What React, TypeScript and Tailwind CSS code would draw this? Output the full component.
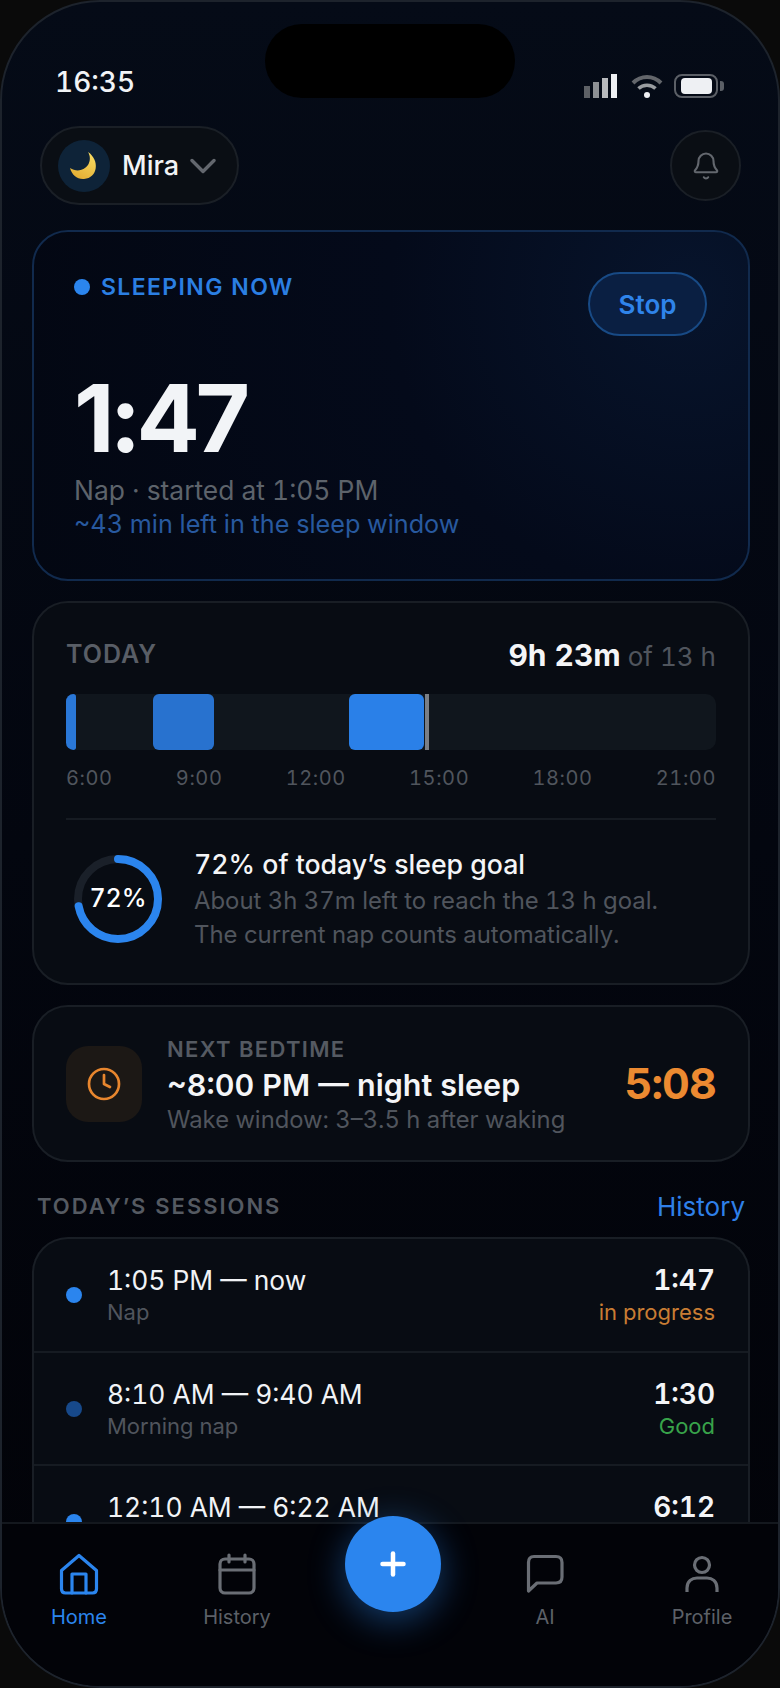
import { Bell, Clock, Plus } from "lucide-react";

const sessions = [
  { range: "1:05 PM — now", kind: "Nap", total: "1:47", note: "in progress", noteColor: "text-[#c97d33]", dot: "bg-[#2b85ee]" },
  { range: "8:10 AM — 9:40 AM", kind: "Morning nap", total: "1:30", note: "Good", noteColor: "text-[#38a34a]", dot: "bg-[#17498a]" },
];

const hours = ["6:00", "9:00", "12:00", "15:00", "18:00", "21:00"];

function StatusIcons() {
  return (
    <div className="mt-[8px] flex items-center">
      <div className="flex items-end gap-[3px]">
        <div className="h-[12px] w-[6px] bg-[#5e6166]" />
        <div className="h-[16px] w-[6px] bg-[#8d9094]" />
        <div className="h-[20px] w-[6px] bg-[#b8babd]" />
        <div className="h-[24px] w-[6px] bg-[#eef0f3]" />
      </div>
      <svg width="32" height="24" viewBox="0 0 32 24" fill="none" className="ml-[14px]">
        <path d="M2 9 C 10 1, 22 1, 30 9" stroke="#63666b" strokeWidth="4" />
        <path d="M7.5 14.5 C 12 10, 20 10, 24.5 14.5" stroke="#9a9da1" strokeWidth="3.5" />
        <circle cx="16" cy="21" r="3" fill="#eef0f3" />
      </svg>
      <div className="ml-[11px] flex h-[24px] w-[44px] items-center justify-center rounded-[8px] border-[2.5px] border-[#5b5f66]">
        <div className="h-[16px] w-[31px] rounded-[4px] bg-[#eef0f3]" />
      </div>
      <div className="ml-[2px] h-[10px] w-[4px] rounded-r-[3px] bg-[#5b5f66]" />
    </div>
  );
}

function Moon() {
  return (
    <svg width="52" height="52" viewBox="0 0 52 52">
      <defs>
        <linearGradient id="moon" x1="0.8" y1="0" x2="0.3" y2="1">
          <stop offset="0" stopColor="#f8dc63" />
          <stop offset="1" stopColor="#e3ad33" />
        </linearGradient>
      </defs>
      <path
        d="M30 12 C 42 20, 40 38, 26 39 C 19 39.5, 14 35, 12 28 C 18 32, 26 31, 30 25 C 32.5 21, 32.5 16, 30 12 Z"
        fill="url(#moon)"
      />
    </svg>
  );
}

function GoalRing() {
  const r = 40;
  const c = 2 * Math.PI * r;
  return (
    <div className="relative mb-[2px] ml-[8px] h-[88px] w-[88px] shrink-0">
      <svg width="88" height="88" viewBox="0 0 88 88" className="-rotate-90">
        <circle cx="44" cy="44" r={r} fill="none" stroke="#1a2029" strokeWidth="8" />
        <circle
          cx="44"
          cy="44"
          r={r}
          fill="none"
          stroke="#2b85ee"
          strokeWidth="8"
          strokeLinecap="round"
          strokeDasharray={`${c * 0.72} ${c}`}
        />
      </svg>
      <div className="absolute inset-0 flex items-center justify-center text-[25px] font-medium text-white">72%</div>
    </div>
  );
}

function HomeIcon() {
  return (
    <svg width="40" height="42" viewBox="0 0 40 42" fill="none" stroke="#2b85ee" strokeWidth="3.2" strokeLinejoin="round" strokeLinecap="round">
      <path d="M2.5 17.5 L20 2.5 L37.5 17.5 V36 Q37.5 40 33.5 40 H6.5 Q2.5 40 2.5 36 Z" />
      <path d="M13 40 V21 H27 V40" />
    </svg>
  );
}

function CalendarIcon() {
  return (
    <svg width="38" height="42" viewBox="0 0 38 42" fill="none" stroke="#6a6e75" strokeWidth="3.2" strokeLinecap="round" strokeLinejoin="round">
      <rect x="2" y="6" width="34" height="34" rx="5" />
      <path d="M2 17 H36" />
      <path d="M11 2 V9 M27 2 V9" />
    </svg>
  );
}

function ChatIcon() {
  return (
    <svg width="38" height="40" viewBox="0 0 38 40" fill="none" stroke="#6a6e75" strokeWidth="3.2" strokeLinejoin="round">
      <path d="M8 2.5 H30 Q36 2.5 36 8.5 V23 Q36 29 30 29 H11 L2.5 37 V8.5 Q2.5 2.5 8 2.5 Z" />
    </svg>
  );
}

function ProfileIcon() {
  return (
    <svg width="34" height="38" viewBox="0 0 34 38" fill="none" stroke="#6a6e75" strokeWidth="3.2">
      <circle cx="17" cy="10" r="7.5" />
      <path d="M2 37 V33 C 2 26, 7 23, 12 23 H22 C 27 23, 32 26, 32 33 V37" />
    </svg>
  );
}

function NavItem({ label, active, children }: { label: string; active?: boolean; children: React.ReactNode }) {
  return (
    <div className="flex flex-col items-center">
      <div className="flex h-[42px] items-center justify-center">{children}</div>
      <div className={`mt-[9px] text-[20px] leading-[26px] ${active ? "text-[#2b85ee]" : "text-[#5c6067]"}`}>{label}</div>
    </div>
  );
}

export default function App() {
  return (
    <div className="h-[1688px] w-[780px] overflow-hidden bg-[#0a0a0a] font-['Inter',sans-serif] text-white tabular-nums">
      <div className="relative flex h-full flex-col overflow-hidden rounded-[100px] border-2 border-[#1d232c] bg-gradient-to-b from-[#050b17] via-[#03060f] to-[#020308]">
        <div className="absolute left-[263px] top-[22px] h-[74px] w-[250px] rounded-[37px] bg-black" />

        <div className="flex h-[124px] shrink-0 items-start justify-between pl-[53px] pr-[54px] pt-[64px]">
          <div className="text-[28px] font-medium leading-[32px] text-[#f1f3f6]">16:35</div>
          <StatusIcons />
        </div>

        <div className="flex h-[79px] shrink-0 items-center justify-between pl-[38px] pr-[37px]">
          <div className="flex h-[79px] w-[199px] items-center rounded-full border-2 border-[#1a1f26] bg-[#0a0e14] pl-[16px]">
            <div className="h-[52px] w-[52px] rounded-full bg-[#0e2338]">
              <Moon />
            </div>
            <span className="ml-[12px] mt-[2px] text-[27px] font-medium text-[#f1f3f6]">Mira</span>
            <svg width="26" height="16" viewBox="0 0 26 16" fill="none" stroke="#63676e" strokeWidth="3.4" strokeLinecap="round" strokeLinejoin="round" className="ml-[11px]">
              <path d="M2 2.5 L13 13.5 L24 2.5" />
            </svg>
          </div>
          <div className="flex h-[71px] w-[71px] items-center justify-center rounded-full border-2 border-[#1a1f26] bg-[#0a0e14]">
            <Bell size={30} strokeWidth={1.7} className="text-[#63676e]" />
          </div>
        </div>

        <div className="mt-[25px] flex min-h-0 flex-1 flex-col overflow-hidden pl-[30px] pr-[30px]">
          <div className="-mr-[2px] h-[351px] shrink-0 rounded-[36px] border-2 border-[#112a4d] bg-[radial-gradient(circle_at_92%_18%,#07142c_0%,#040a1a_42%,#030712_100%)] pl-[40px] pr-[41px] pt-[40px]">
            <div className="flex items-start justify-between">
              <div className="flex h-[30px] items-center">
                <div className="h-[16px] w-[16px] rounded-full bg-[#2b85ee]" />
                <span className="ml-[11px] text-[23px] font-semibold tracking-[0.06em] text-[#2b7fe3]">SLEEPING NOW</span>
              </div>
              <div className="flex h-[64px] w-[119px] items-center justify-center rounded-full border-2 border-[#184a85] bg-[#0a1f42] text-[26px] font-semibold text-[#2f84ea]">
                Stop
              </div>
            </div>
            <div className="mt-[44px] text-[94px] font-bold leading-[76px] tracking-[-0.05em] text-[#f2f4f7] [font-variant-numeric:normal]">1:47</div>
            <div className="mt-[17px] text-[26.4px] leading-[34px] text-[#5d636b]">Nap · started at 1:05 PM</div>
            <div className="text-[25.2px] leading-[34px] text-[#28599f]">~43 min left in the sleep window</div>
          </div>

          <div className="-mr-[2px] mt-[20px] h-[384px] shrink-0 rounded-[36px] border-2 border-[#191e25] bg-[#080c13] px-[32px] pt-[32px]">
            <div className="flex h-[40px] items-center justify-between">
              <span className="text-[25px] font-semibold tracking-[0.04em] text-[#595e66]">TODAY</span>
              <span className="text-[26px] text-[#50555d]">
                <span className="text-[30px] font-bold text-[#f4f5f7]">9h 23m</span> of 13 h
              </span>
            </div>
            <div className="relative mt-[19px] h-[56px] rounded-[10px] bg-[#10161d]">
              <div className="absolute bottom-0 left-0 top-0 w-[10px] rounded-l-[8px] rounded-r-[3px] bg-[#2a78d8]" />
              <div className="absolute bottom-0 left-[87px] top-0 w-[61px] rounded-[6px] bg-[#2872cf]" />
              <div className="absolute bottom-0 left-[283px] top-0 w-[75px] rounded-[6px] bg-[#2a80e8]" />
              <div className="absolute bottom-0 left-[359px] top-0 w-[4px] bg-[#7a7f86]" />
            </div>
            <div className="mt-[16px] flex justify-between text-[20px] leading-[24px] tracking-[0.03em] text-[#50555d]">
              {hours.map((h) => (
                <span key={h}>{h}</span>
              ))}
            </div>
            <div className="mt-[28px] flex items-center gap-[32px] border-t-2 border-[#161b22] pt-[28px]">
              <GoalRing />
              <div>
                <div className="mb-[4px] text-[26.7px] font-medium leading-[32px] text-[#f4f5f7]">72% of today’s sleep goal</div>
                <div className="text-[23.9px] leading-[34px] text-[#50555d]">About 3h 37m left to reach the 13 h goal.</div>
                <div className="text-[23.9px] leading-[34px] text-[#50555d]">The current nap counts automatically.</div>
              </div>
            </div>
          </div>

          <div className="-mr-[2px] mt-[20px] flex h-[157px] shrink-0 items-center rounded-[36px] border-2 border-[#191e25] bg-[#080c13] pl-[32px] pr-[32px]">
            <div className="flex h-[76px] w-[76px] shrink-0 items-center justify-center rounded-[22px] bg-[#1c1815]">
              <Clock size={36} strokeWidth={1.8} className="text-[#e8862e]" />
            </div>
            <div className="ml-[25px] flex-1">
              <div className="text-[22px] font-semibold leading-[26px] tracking-[0.06em] text-[#555a62]">NEXT BEDTIME</div>
              <div className="text-[30.5px] font-semibold leading-[46px] text-[#f4f5f7]">~8:00 PM — night sleep</div>
              <div className="text-[23.8px] leading-[24px] text-[#50555d]">Wake window: 3–3.5 h after waking</div>
            </div>
            <div className="text-[43px] font-bold tracking-[-0.02em] text-[#ec8a31]">5:08</div>
          </div>

          <div className="-mr-[2px] mt-[29px] flex h-[30px] shrink-0 items-center justify-between pl-[5px] pr-[5px]">
            <span className="text-[22px] font-semibold tracking-[0.09em] text-[#555a62]">TODAY’S SESSIONS</span>
            <span className="text-[26px] text-[#2f80e8]">History</span>
          </div>

          <div className="-mr-[2px] mt-[16px] shrink-0 rounded-t-[36px] border-2 border-b-0 border-[#191e25] bg-[#080c13]">
            {sessions.map((s, i) => (
              <div key={s.range} className={`flex items-center pl-[32px] pr-[33px] ${i === 0 ? "h-[112px]" : "h-[113px] border-t-2 border-[#161b22]"}`}>
                <div className={`h-[16px] w-[16px] rounded-full ${s.dot}`} />
                <div className="ml-[25px] flex-1">
                  <div className="text-[26.4px] leading-[34px] text-[#f1f3f6]">{s.range}</div>
                  <div className="text-[22px] leading-[30px] text-[#50555d]">{s.kind}</div>
                </div>
                <div className="text-right">
                  <div className="text-[28px] font-semibold leading-[34px] text-[#f4f5f7]">{s.total}</div>
                  <div className={`text-[22px] leading-[30px] ${s.noteColor}`}>{s.note}</div>
                </div>
              </div>
            ))}
            {/* third row runs under the tab bar */}
            <div className="flex h-[58px] items-start border-t-2 border-[#161b22] pl-[32px] pr-[33px] pt-[24px]">
              <div className="mt-[24px] h-[16px] w-[16px] rounded-full bg-[#2b85ee]" />
              <div className="ml-[25px] flex-1 text-[26.4px] leading-[34px] text-[#f1f3f6]">12:10 AM — 6:22 AM</div>
              <div className="text-[28px] font-semibold leading-[34px] text-[#f4f5f7]">6:12</div>
            </div>
          </div>
        </div>

        <div className="grid h-[164px] shrink-0 grid-cols-[154px_162px_150px_154px_160px] border-t-2 border-[#14181e] bg-[#020308] pt-[29px]">
          <NavItem label="Home" active>
            <HomeIcon />
          </NavItem>
          <NavItem label="History">
            <CalendarIcon />
          </NavItem>
          <div className="flex justify-center">
            <div className="-mt-[37px] flex h-[96px] w-[96px] items-center justify-center rounded-full bg-[#2b85ee] shadow-[0_8px_36px_rgba(43,133,238,0.45)]">
              <Plus size={36} strokeWidth={3} className="text-white" />
            </div>
          </div>
          <NavItem label="AI">
            <ChatIcon />
          </NavItem>
          <NavItem label="Profile">
            <ProfileIcon />
          </NavItem>
        </div>
      </div>
    </div>
  );
}
